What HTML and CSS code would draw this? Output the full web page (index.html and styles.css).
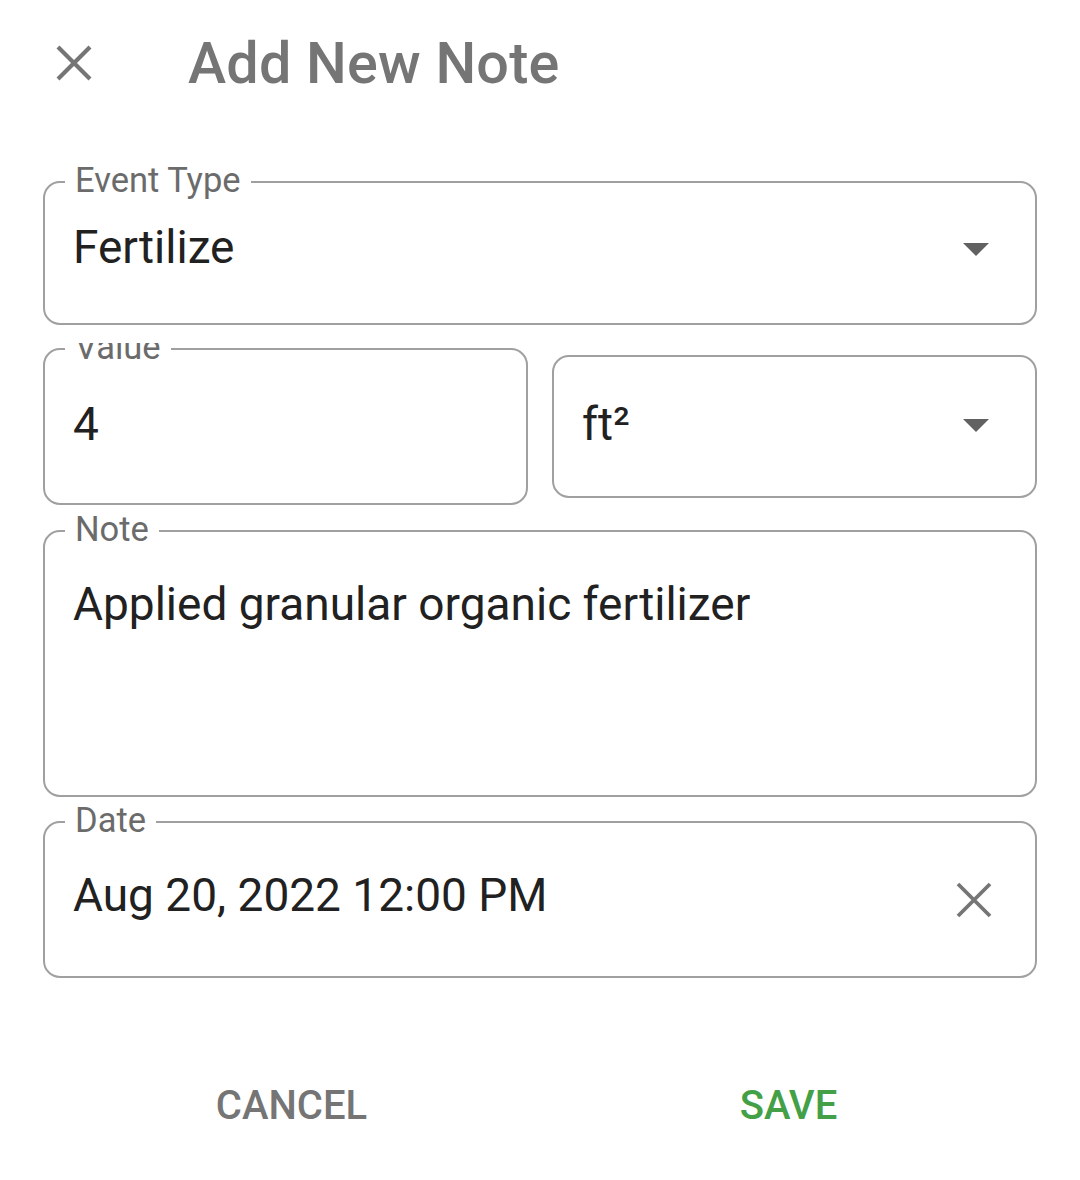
FILE: index.html
```html
<!DOCTYPE html>
<html>
<head>
<meta charset="utf-8">
<link rel="stylesheet" href="styles.css">
</head>
<body>
<div class="dialog">
  <header class="header">
    <div class="close-btn">
      <svg width="38" height="38" viewBox="0 0 38 38"><path d="M3 3 L35 35 M35 3 L3 35" stroke="#757575" stroke-width="4.2" fill="none"/></svg>
    </div>
    <h1 class="title">Add New Note</h1>
  </header>

  <div class="form">
    <div class="field field-event">
      <span class="label">Event Type</span>
      <div class="field-row">
        <span class="value">Fertilize</span>
        <span class="arrow"></span>
      </div>
    </div>

    <div class="row2">
      <div class="field field-value">
        <span class="label">Value</span>
        <div class="field-row">
          <span class="value">4</span>
        </div>
      </div>
      <div class="field field-unit">
        <div class="field-row">
          <span class="value">ft²</span>
          <span class="arrow"></span>
        </div>
      </div>
    </div>

    <div class="field field-note">
      <span class="label">Note</span>
      <div class="field-row">
        <span class="value">Applied granular organic fertilizer</span>
      </div>
    </div>

    <div class="field field-date">
      <span class="label">Date</span>
      <div class="field-row">
        <span class="value">Aug 20, 2022 12:00 PM</span>
        <svg class="clear" width="36" height="36" viewBox="0 0 36 36"><path d="M2 2 L34 34 M34 2 L2 34" stroke="#757575" stroke-width="3.8" fill="none"/></svg>
      </div>
    </div>

    <div class="actions">
      <div class="btn btn-cancel">CANCEL</div>
      <div class="btn btn-save">SAVE</div>
    </div>
  </div>
</div>
</body>
</html>
```

FILE: styles.css
```css
* { box-sizing: border-box; }
html, body {
  margin: 0;
  padding: 0;
  background: #ffffff;
  font-family: Roboto, "Noto Sans", sans-serif;
}
.dialog {
  width: 1080px;
  height: 1180px;
  overflow: hidden;
}
.header {
  display: flex;
  align-items: center;
  height: 126px;
  padding-left: 55px;
}
.close-btn {
  width: 38px;
  height: 38px;
  display: flex;
}
.title {
  margin: 0 0 0 95px;
  font-size: 57.5px;
  font-weight: 500;
  color: #757575;
  letter-spacing: 0.2px;
}
.form {
  padding: 55px 43px 0 43px;
}
.field {
  position: relative;
  border: 2px solid #a0a0a0;
  border-radius: 17px;
}
.label {
  position: absolute;
  left: 20px;
  top: -23px;
  padding: 0 10px;
  background: #ffffff;
  font-size: 34.5px;
  line-height: 40px;
  color: #6b6b6b;
}
.field-row {
  display: flex;
  align-items: flex-start;
  padding-left: 28px;
  padding-right: 46px;
}
.value {
  flex: 1;
  font-size: 46px;
  line-height: 46px;
  color: #212121;
}
.arrow {
  width: 0;
  height: 0;
  border-left: 13px solid transparent;
  border-right: 13px solid transparent;
  border-top: 13px solid #616161;
}
.field-event {
  height: 144px;
}
.field-event .field-row {
  padding-top: 41px;
}
.field-event .arrow {
  margin-top: 19px;
}
.row2 {
  display: flex;
  gap: 24px;
  margin-top: 18px;
  padding-top: 5px;
  overflow: hidden;
  align-items: center;
}
.field-value {
  flex: 1;
  height: 157px;
}
.field-value .field-row {
  padding-top: 51px;
}
.field-unit {
  flex: 1;
  height: 143px;
}
.field-unit .field-row {
  padding-top: 44px;
}
.field-unit .arrow {
  margin-top: 18px;
}
.field-note {
  height: 267px;
  margin-top: 25px;
}
.field-note .field-row {
  padding-top: 49px;
}
.field-date {
  height: 157px;
  margin-top: 24px;
}
.field-date .field-row {
  padding-top: 49px;
  padding-right: 43px;
}
.clear {
  margin-top: 10px;
}
.actions {
  display: flex;
  margin-top: 104px;
}
.btn {
  flex: 1;
  text-align: center;
  font-size: 40px;
  font-weight: 500;
  line-height: 48px;
}
.btn-cancel {
  color: #757575;
}
.btn-save {
  color: #43a047;
}
```
